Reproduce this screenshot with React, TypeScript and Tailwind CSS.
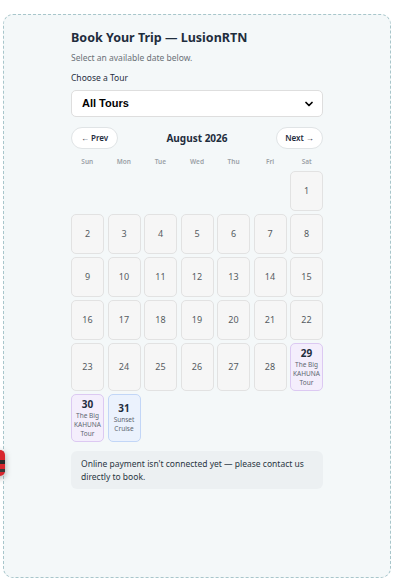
import { ChevronDown } from "lucide-react";

const font = { fontFamily: '"Noto Sans", "Open Sans", sans-serif' };

type Event = { title: string; tone: "purple" | "blue" };

const events: Record<number, Event> = {
  29: { title: "The Big KAHUNA Tour", tone: "purple" },
  30: { title: "The Big KAHUNA Tour", tone: "purple" },
  31: { title: "Sunset Cruise", tone: "blue" },
};

const weekdays = ["Sun", "Mon", "Tue", "Wed", "Thu", "Fri", "Sat"];

function DayCell({ day }: { day: number }) {
  const ev = events[day];
  if (!ev) {
    return (
      <div className="flex min-h-[40px] items-center justify-center rounded-[5px] border border-[#e2e2e2] bg-[#f6f6f6] text-[9px] text-[#555b61]">
        {day}
      </div>
    );
  }
  const tone =
    ev.tone === "purple"
      ? "border-[#dcc9f2] bg-[#f4eefc]"
      : "border-[#c2d6f7] bg-[#ebf2fd]";
  return (
    <div
      className={`flex min-h-[40px] flex-col items-center justify-center rounded-[5px] border px-[1px] py-[3px] text-center ${tone}`}
    >
      <span className="text-[10px] font-bold leading-[13px] text-[#1f2d3d]">{day}</span>
      <span className="text-[6.5px] leading-[9px] text-[#5d6670]">{ev.title}</span>
    </div>
  );
}

export default function App() {
  const cells: (number | null)[] = [...Array(6).fill(null)];
  for (let d = 1; d <= 31; d++) cells.push(d);

  return (
    <div className="relative min-h-[588px] bg-white pt-[14px]" style={font}>
      <div className="ml-[3px] h-[564px] w-[388px] rounded-[10px] border border-dashed border-[#a8c6cb] bg-[#f4f8f9] pt-[14px]">
        <div className="mx-auto w-[252px]">
          <h1 className="text-[12.5px] font-bold leading-[18px] text-[#1f2d3d]">
            Book Your Trip — LusionRTN
          </h1>
          <p className="mt-[5px] text-[8.5px] leading-[12px] text-[#6b7178]">
            Select an available date below.
          </p>
          <p className="mt-[8px] text-[8.5px] leading-[12px] text-[#1f2d3d]">Choose a Tour</p>
          <div className="mt-[6px] flex h-[27px] items-center justify-between rounded-[5px] border border-[#dedede] bg-white pl-[10px] pr-[7px]">
            <span
              className="text-[11px] font-bold text-black"
              style={{ fontFamily: '"Liberation Sans", Arial, sans-serif' }}
            >
              All Tours
            </span>
            <ChevronDown size={12} strokeWidth={3.5} className="text-black" />
          </div>

          <div className="mt-[10px] flex items-center justify-between">
            <button className="h-[22px] w-[47px] rounded-full border border-[#e0e4e6] bg-white text-[8px] font-semibold text-[#1f2d3d]">
              ← Prev
            </button>
            <span className="text-[10px] font-bold text-[#1f2d3d]">August 2026</span>
            <button className="h-[22px] w-[47px] rounded-full border border-[#e0e4e6] bg-white text-[8px] font-semibold text-[#1f2d3d]">
              Next →
            </button>
          </div>

          <div className="mt-[8px] grid grid-cols-7 gap-x-[4px]">
            {weekdays.map((w) => (
              <div key={w} className="text-center text-[6.5px] font-semibold text-[#9aa0a6]">
                {w}
              </div>
            ))}
          </div>

          <div className="mt-[4px] grid grid-cols-7 gap-x-[3.5px] gap-y-[3px]">
            {cells.map((d, i) =>
              d === null ? <div key={`e${i}`} /> : <DayCell key={d} day={d} />
            )}
          </div>

          <div className="mt-[9px] rounded-[6px] bg-[#ecf0f2] px-[10px] py-[6px] text-[8.5px] leading-[13px] text-[#2a3642]">
            Online payment isn&apos;t connected yet — please contact us directly to book.
          </div>
        </div>
      </div>

      {/* floating widget peeking from the left edge */}
      <div className="absolute left-[-8px] top-[450px] h-[26px] w-[13px] rounded-[5px] bg-[#d8262e] shadow-[0_2px_6px_rgba(0,0,0,0.35)]">
        <div className="mt-[10px] h-[4px] w-full bg-[#2a2a2a]" />
        <div className="mt-[5px] h-[3px] w-full bg-[#3a3a3a]" />
      </div>
    </div>
  );
}
